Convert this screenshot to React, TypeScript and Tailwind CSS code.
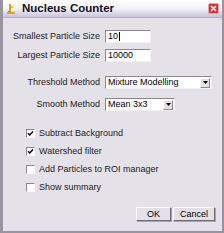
import React from "react";

const font = { fontFamily: '"Liberation Sans", Arial, sans-serif' };

function Field({ label, children, className = "" }: { label: string; children: React.ReactNode; className?: string }) {
  return (
    <div className={`flex items-center ${className}`}>
      <div className="w-[98px] pr-px text-right text-[9px] leading-none text-[#1c1c20]">{label}</div>
      <div className="ml-[4px]">{children}</div>
    </div>
  );
}

function TextBox({ value, caret }: { value: string; caret?: boolean }) {
  return (
    <div className="flex h-[13px] w-[46px] items-center border border-t-[#8a8794] border-l-[#8a8794] border-r-[#f4f2f6] border-b-[#f4f2f6] bg-white pl-[2px] text-[9px] leading-none text-black">
      {value}
      {caret && <span className="ml-px h-[9px] w-px bg-black" />}
    </div>
  );
}

function Select({ value, width }: { value: string; width: string }) {
  return (
    <div className={`flex h-[13px] ${width} items-center border border-t-[#8a8794] border-l-[#8a8794] border-r-[#f4f2f6] border-b-[#f4f2f6] bg-white text-[9px] leading-none text-black`}>
      <span className="flex-1 pl-[2px]">{value}</span>
      <span className="mr-px flex h-[10px] w-[10px] items-center justify-center border border-t-white border-l-white border-r-[#8a8794] border-b-[#8a8794] bg-[#e4e0e8]">
        <svg width="5" height="3" viewBox="0 0 5 3">
          <path d="M0 0h5L2.5 3z" fill="#000" />
        </svg>
      </span>
    </div>
  );
}

function Check({ label, checked }: { label: string; checked?: boolean }) {
  return (
    <div className="flex h-[12px] items-center">
      <span className="flex h-[9px] w-[9px] items-center justify-center border border-t-[#8a8794] border-l-[#8a8794] border-r-[#fbfafc] border-b-[#fbfafc] bg-white">
        {checked && (
          <svg width="7" height="7" viewBox="0 0 7 7">
            <path d="M1 3.2l1.8 1.8L6 1.5" stroke="#000" strokeWidth="1.5" fill="none" />
          </svg>
        )}
      </span>
      <span className="ml-[4px] text-[9px] leading-none text-[#1c1c20]">{label}</span>
    </div>
  );
}

function Button({ label, width }: { label: string; width: string }) {
  return (
    <div className={`flex h-[14px] ${width} items-center justify-center border border-t-white border-l-white border-r-[#6e6b78] border-b-[#6e6b78] bg-[#e4e0e8] text-[9px] leading-none text-black shadow-[1px_1px_0_#a8a4b0]`}>
      {label}
    </div>
  );
}

export default function App() {
  return (
    <div className="h-[233px] w-[224px] bg-white" style={font}>
      <div className="flex h-[233px] w-[224px] flex-col border-r-[2px] border-b-[2px] border-l-[3px] border-[#98949f] bg-[#e5e1e9]">
        <div className="flex h-[18px] items-center border-b border-[#b4b0c4] bg-gradient-to-b from-white via-[#f4f2f8] to-[#c8c4dc]">
          <svg className="ml-[3px]" width="10" height="12" viewBox="0 0 10 12">
            <path d="M3 1h2v7H3z" fill="#d8a818" />
            <path d="M5 3h2v2H5z" fill="#e8c030" />
            <path d="M1 9h8v2H1z" fill="#d8a818" />
            <path d="M2 8h3v1H2z" fill="#c09010" />
          </svg>
          <span className="ml-[6px] text-[11.5px] font-bold leading-none text-[#101018]">Nucleus Counter</span>
          <span className="ml-auto mr-[3px] flex h-[11px] w-[11px] items-center justify-center rounded-[2px] border border-[#f0a0a0] bg-[#d83030]">
            <svg width="7" height="7" viewBox="0 0 7 7">
              <path d="M1 1l5 5M6 1L1 6" stroke="#fff" strokeWidth="1.6" />
            </svg>
          </span>
        </div>

        <Field label="Smallest Particle Size" className="mt-[12px]">
          <TextBox value="10" caret />
        </Field>
        <Field label="Largest Particle Size" className="mt-[6px]">
          <TextBox value="10000" />
        </Field>
        <Field label="Threshold Method" className="mt-[14px]">
          <Select value="Mixture Modelling" width="w-[107px]" />
        </Field>
        <Field label="Smooth Method" className="mt-[9px]">
          <Select value="Mean 3x3" width="w-[70px]" />
        </Field>

        <div className="mt-[16px] flex flex-col gap-[6px] pl-[23px]">
          <Check label="Subtract Background" checked />
          <Check label="Watershed filter" checked />
          <Check label="Add Particles to ROI manager" />
          <Check label="Show summary" />
        </div>

        <div className="mt-[14px] flex justify-end gap-[2px] pr-[7px]">
          <Button label="OK" width="w-[35px]" />
          <Button label="Cancel" width="w-[42px]" />
        </div>
      </div>
    </div>
  );
}
